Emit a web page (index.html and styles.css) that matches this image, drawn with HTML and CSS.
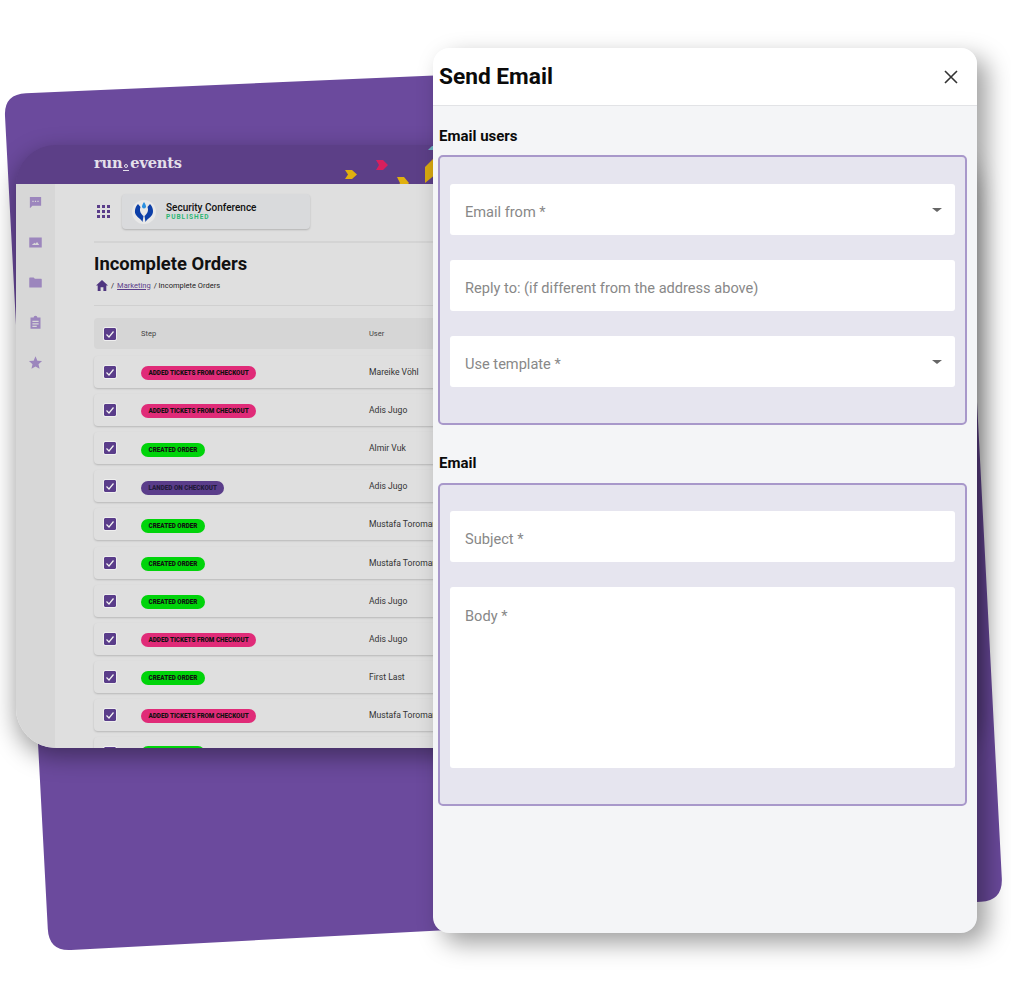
FILE: index.html
```html
<!DOCTYPE html>
<html lang="en">
<head>
  <meta charset="UTF-8" />
  <meta name="viewport" content="width=device-width, initial-scale=1.0" />
  <title>Send Email</title>
  <link rel="stylesheet" href="styles.css">
</head>
<body>
  <div class="stage">
    <svg class="backdrop" width="1011" height="1000" viewBox="0 0 1011 1000">
      <path d="M26 93.200 L936 53.800 Q958.800 52.800 960 75 L1001.800 878 Q1003 900.500 981 901.800 L71 950 Q49 951.300 47.800 929 L5 116 Q3.800 94.200 26 93.200 Z" />
    </svg>

    <div class="dashboard">
      <div class="topbar">
        <div class="brand">run<span class="brand-mark"></span>events</div>
        <svg class="arrows" width="480" height="39" viewBox="0 0 480 39">
          <polygon fill="#e0b00f" points="329,25 336,25 341,29.500 336,34 329,34 332,29.500" />
          <polygon fill="#d81f5d" points="360,15 367,15 372,20 367,25 360,25 363,20" />
          <polygon fill="#e0b00f" points="381,32 388,32 393,38 388,44 381,44 384,38" />
          <polygon fill="#d9a90f" points="409,22 420,11 420,29 409,38" />
          <polygon fill="#6fb3c0" points="412,5 416,1 420,1 420,5" />
        </svg>
      </div>
      <div class="dash-body">
        <div class="sidebar">
          <svg viewBox="0 0 24 24"><path d="M3 3h18v14H7l-4 4z M7 9h2v2H7z M11 9h2v2h-2z M15 9h2v2h-2z" fill-rule="evenodd" /></svg>
          <svg viewBox="0 0 24 24"><path d="M2 4h20v16H2z M6 16h12l-3.500-5-2.500 3-1.500-1.500z" fill-rule="evenodd" /></svg>
          <svg viewBox="0 0 24 24"><path d="M2 5a1 1 0 0 1 1-1h6l2 2h10a1 1 0 0 1 1 1v12a1 1 0 0 1-1 1H3a1 1 0 0 1-1-1z" /></svg>
          <svg viewBox="0 0 24 24"><path d="M4 4h5a3 3 0 0 1 6 0h5v18H4z M7 9h10v2H7z M7 13h10v2H7z M7 17h7v2H7z" fill-rule="evenodd" /></svg>
          <svg viewBox="0 0 24 24"><path d="M12 2l3 7 7.500.7-5.700 5 1.700 7.300L12 18.200 5.500 22l1.700-7.300-5.700-5L9 9z" /></svg>
        </div>
        <div class="main">
          <div class="event-bar">
            <svg class="apps" width="13" height="13" viewBox="0 0 13 13">
              <path d="M0 0h3v3H0z M5 0h3v3H5z M10 0h3v3h-3z M0 5h3v3H0z M5 5h3v3H5z M10 5h3v3h-3z M0 10h3v3H0z M5 10h3v3H5z M10 10h3v3h-3z" />
            </svg>
            <div class="event-card">
              <div class="event-logo">
                <svg width="20" height="22" viewBox="0 0 20 22">
                  <path fill="#0d3fa8" d="M4 3 C1 6 0 11 2 14 C4 17 7 18 8.500 21 L9.500 15 C7 13 5 10 6.500 6z" />
                  <path fill="#0d3fa8" d="M16 3 C19 6 20 11 18 14 C16 17 13 18 11.500 21 L10.500 15 C13 13 15 10 13.500 6z" />
                  <path fill="#2a8fe0" d="M10 1 C11.500 3.500 12 4.500 12 5.500 A2 2 0 0 1 8 5.500 C8 4.500 8.500 3.500 10 1z" />
                </svg>
              </div>
              <div>
                <div class="event-name">Security Conference</div>
                <div class="event-status">PUBLISHED</div>
              </div>
            </div>
          </div>

          <h1 class="page-title">Incomplete Orders</h1>
          <div class="crumbs">
            <svg width="12" height="11" viewBox="0 0 12 11"><path d="M6 0l6 5.500h-1.700V11H7.400V7.300H4.600V11H1.700V5.500H0z" /></svg>
            <span>/</span> <a class="crumb-link">Marketing</a> <span>/ Incomplete Orders</span>
          </div>

          <div class="table">
            <div class="row row-head">
              <span class="check"><svg viewBox="0 0 12 12"><path d="M2.500 6.500l2.500 2.500 4.500-5.500" /></svg></span>
              <span class="head-cell">Step</span>
              <span class="head-cell">User</span>
            </div>
            <div class="row">
              <span class="check"><svg viewBox="0 0 12 12"><path d="M2.500 6.500l2.500 2.500 4.500-5.500" /></svg></span>
              <span><span class="chip chip-pink">ADDED TICKETS FROM CHECKOUT</span></span>
              <span class="user">Mareike Vöhl</span>
            </div>
            <div class="row">
              <span class="check"><svg viewBox="0 0 12 12"><path d="M2.500 6.500l2.500 2.500 4.500-5.500" /></svg></span>
              <span><span class="chip chip-pink">ADDED TICKETS FROM CHECKOUT</span></span>
              <span class="user">Adis Jugo</span>
            </div>
            <div class="row">
              <span class="check"><svg viewBox="0 0 12 12"><path d="M2.500 6.500l2.500 2.500 4.500-5.500" /></svg></span>
              <span><span class="chip chip-green">CREATED ORDER</span></span>
              <span class="user">Almir Vuk</span>
            </div>
            <div class="row">
              <span class="check"><svg viewBox="0 0 12 12"><path d="M2.500 6.500l2.500 2.500 4.500-5.500" /></svg></span>
              <span><span class="chip chip-purple">LANDED ON CHECKOUT</span></span>
              <span class="user">Adis Jugo</span>
            </div>
            <div class="row">
              <span class="check"><svg viewBox="0 0 12 12"><path d="M2.500 6.500l2.500 2.500 4.500-5.500" /></svg></span>
              <span><span class="chip chip-green">CREATED ORDER</span></span>
              <span class="user">Mustafa Toroman</span>
            </div>
            <div class="row">
              <span class="check"><svg viewBox="0 0 12 12"><path d="M2.500 6.500l2.500 2.500 4.500-5.500" /></svg></span>
              <span><span class="chip chip-green">CREATED ORDER</span></span>
              <span class="user">Mustafa Toroman</span>
            </div>
            <div class="row">
              <span class="check"><svg viewBox="0 0 12 12"><path d="M2.500 6.500l2.500 2.500 4.500-5.500" /></svg></span>
              <span><span class="chip chip-green">CREATED ORDER</span></span>
              <span class="user">Adis Jugo</span>
            </div>
            <div class="row">
              <span class="check"><svg viewBox="0 0 12 12"><path d="M2.500 6.500l2.500 2.500 4.500-5.500" /></svg></span>
              <span><span class="chip chip-pink">ADDED TICKETS FROM CHECKOUT</span></span>
              <span class="user">Adis Jugo</span>
            </div>
            <div class="row">
              <span class="check"><svg viewBox="0 0 12 12"><path d="M2.500 6.500l2.500 2.500 4.500-5.500" /></svg></span>
              <span><span class="chip chip-green">CREATED ORDER</span></span>
              <span class="user">First Last</span>
            </div>
            <div class="row">
              <span class="check"><svg viewBox="0 0 12 12"><path d="M2.500 6.500l2.500 2.500 4.500-5.500" /></svg></span>
              <span><span class="chip chip-pink">ADDED TICKETS FROM CHECKOUT</span></span>
              <span class="user">Mustafa Toroman</span>
            </div>
            <div class="row">
              <span class="check"><svg viewBox="0 0 12 12"><path d="M2.500 6.500l2.500 2.500 4.500-5.500" /></svg></span>
              <span class="chip chip-green chip-blank"></span>
              <span></span>
            </div>
          </div>
        </div>
      </div>
    </div>

    <div class="panel">
      <div class="panel-head">
        <h2>Send Email</h2>
        <svg class="close" width="14" height="14" viewBox="0 0 14 14"><path d="M1 1l12 12M13 1L1 13" /></svg>
      </div>
      <div class="panel-body">
        <div class="section-label">Email users</div>
        <div class="box">
          <div class="field">Email from *<span class="caret"></span></div>
          <div class="field">Reply to: (if different from the address above)</div>
          <div class="field">Use template *<span class="caret"></span></div>
        </div>
        <div class="section-label section-label-second">Email</div>
        <div class="box box-email">
          <div class="field">Subject *</div>
          <div class="field field-body">Body *</div>
        </div>
      </div>
    </div>
  </div>
</body>
</html>
```

FILE: styles.css
```css
body {
  margin: 0;
  background: #fff;
  font-family: Roboto, "Noto Sans", sans-serif;
  color: #111;
}
.stage {
  position: relative;
  width: 1011px;
  height: 1000px;
  overflow: hidden;
}
.backdrop {
  position: absolute;
  left: 0;
  top: 0;
  fill: #6b4a9d;
}

/* dashboard behind the panel */
.dashboard {
  position: absolute;
  left: 16px;
  top: 145px;
  width: 960px;
  height: 603px;
  border-radius: 40px;
  overflow: hidden;
  box-shadow: 0 8px 24px rgba(0,0,0,0.4);
  background: linear-gradient(#5c3f87 39px, #dfdfdf 39px);
  display: flex;
  flex-direction: column;
}
.topbar {
  position: relative;
  height: 39px;
  flex: none;
  background: #5c3f87;
}
.brand {
  display: flex;
  align-items: flex-start;
  margin-left: 78px;
  padding-top: 8px;
  font-family: "DejaVu Serif", serif;
  font-weight: bold;
  font-size: 14.600px;
  line-height: 20px;
  letter-spacing: -0.2px;
  color: #e4e0ea;
}
.brand-mark {
  position: relative;
  width: 6px;
  height: 20px;
  margin: 0 1px;
}
.brand-mark::before {
  content: "";
  position: absolute;
  left: 1px;
  top: 11px;
  width: 2px;
  height: 2px;
  border: 1px solid #e4e0ea;
  border-radius: 50%;
}
.brand-mark::after {
  content: "";
  position: absolute;
  left: 0;
  top: 17px;
  width: 6px;
  height: 1px;
  background: #e4e0ea;
}
.arrows {
  position: absolute;
  left: 0;
  top: 0;
}
.dash-body {
  flex: 1;
  display: flex;
  min-height: 0;
}
.sidebar {
  width: 39px;
  flex: none;
  background: #d7d7d7;
  display: flex;
  flex-direction: column;
  align-items: center;
  gap: 25px;
  padding-top: 11px;
  box-sizing: border-box;
}
.sidebar svg {
  width: 15px;
  height: 15px;
  fill: #9c86bd;
}
.main {
  flex: 1;
  padding: 10px 0 0 39px;
}
.event-bar {
  display: flex;
  align-items: center;
  gap: 12px;
  padding: 0 0 12px 3px;
  border-bottom: 2px solid #d4d4d4;
}
.apps {
  fill: #5a3d8a;
}
.event-card {
  width: 188px;
  height: 35px;
  box-sizing: border-box;
  display: flex;
  align-items: center;
  gap: 10px;
  padding-left: 10px;
  background: #d9dadc;
  border-radius: 4px;
  box-shadow: 0 1px 2px rgba(0,0,0,0.2);
}
.event-logo {
  width: 24px;
  height: 24px;
  border-radius: 50%;
  background: #e8e8e8;
  display: flex;
  align-items: center;
  justify-content: center;
}
.event-name {
  font-size: 10px;
  font-weight: 500;
  line-height: 11px;
}
.event-status {
  font-size: 6.500px;
  font-weight: bold;
  letter-spacing: 1px;
  line-height: 9px;
  color: #2bb673;
}
.page-title {
  margin: 9px 0 0;
  font-size: 18.400px;
  font-weight: bold;
  line-height: 23px;
}
.crumbs {
  display: flex;
  align-items: center;
  gap: 3px;
  height: 16px;
  margin-top: 2px;
  padding: 0 0 12px 2px;
  font-size: 7.500px;
  color: #222;
  border-bottom: 1px solid #d0d0d0;
}
.crumbs svg {
  fill: #4f3580;
}
.crumb-link {
  color: #5a3d8a;
  text-decoration: underline;
}
.table {
  display: flex;
  flex-direction: column;
  gap: 6.100px;
  margin-top: 12px;
}
.row {
  display: grid;
  grid-template-columns: 37px 228px 1fr;
  align-items: center;
  height: 32px;
  padding-left: 10px;
  border-radius: 4px;
  background: #dfdfdf;
  box-shadow: 0 1px 2px rgba(0,0,0,0.18);
  flex: none;
}
.row-head {
  height: 31px;
  margin-bottom: 1px;
  background: #d6d6d6;
  box-shadow: none;
}
.head-cell {
  font-size: 7.500px;
  color: #444;
}
.check {
  width: 12px;
  height: 12px;
  background: #5a3d8a;
  outline: 0.5px solid #efefef;
  border-radius: 1px;
}
.check svg {
  display: block;
  fill: none;
  stroke: #f2f2f2;
  stroke-width: 1.200;
}
.chip {
  display: inline-block;
  height: 14px;
  padding: 0 7.500px;
  border-radius: 7px;
  font-size: 6.300px;
  font-weight: 900;
  line-height: 14px;
  color: #111;
  vertical-align: middle;
}
.chip-pink {
  background: #e02b78;
}
.chip-green {
  background: #00d40a;
}
.chip-purple {
  background: #5a3d8a;
  color: #221a3a;
}
.chip-blank {
  display: block;
  width: 49px;
}
.user {
  font-size: 8.600px;
  color: #333;
}

/* send email panel */
.panel {
  position: absolute;
  left: 433px;
  top: 48px;
  width: 544px;
  height: 885px;
  border-radius: 16px;
  background: #f4f5f7;
  overflow: hidden;
  box-shadow: 10px 10px 24px rgba(0,0,0,0.38);
}
.panel-head {
  height: 58px;
  box-sizing: border-box;
  display: flex;
  align-items: center;
  justify-content: space-between;
  padding: 0 19px 0 6px;
  background: #fff;
  border-bottom: 1px solid #e2e3e6;
}
.panel-head h2 {
  margin: 0;
  font-size: 22.700px;
  font-weight: bold;
  line-height: 28px;
  color: #0a0a0a;
}
.close {
  fill: none;
  stroke: #333;
  stroke-width: 1.600;
}
.panel-body {
  padding: 20px 10px 0 5px;
}
.section-label {
  padding-left: 1px;
  font-size: 15px;
  font-weight: bold;
  line-height: 20px;
  color: #0a0a0a;
  margin-bottom: 9px;
}
.section-label-second {
  margin-top: 28px;
  margin-bottom: 10px;
}
.box {
  display: flex;
  flex-direction: column;
  gap: 25px;
  padding: 27px 10px 36px;
  background: #e6e5ef;
  border: 2px solid #a898ca;
  border-radius: 5px;
}
.box-email {
  padding-top: 26px;
}
.field {
  position: relative;
  height: 51px;
  box-sizing: border-box;
  padding: 0 15px;
  background: #fff;
  border-radius: 3px;
  font-size: 14.600px;
  line-height: 57px;
  color: #888;
}
.field-body {
  height: 181px;
  line-height: 58px;
}
.caret {
  position: absolute;
  right: 13px;
  top: 24px;
  width: 0;
  height: 0;
  border-left: 5px solid transparent;
  border-right: 5px solid transparent;
  border-top: 4.500px solid #666;
}
```
